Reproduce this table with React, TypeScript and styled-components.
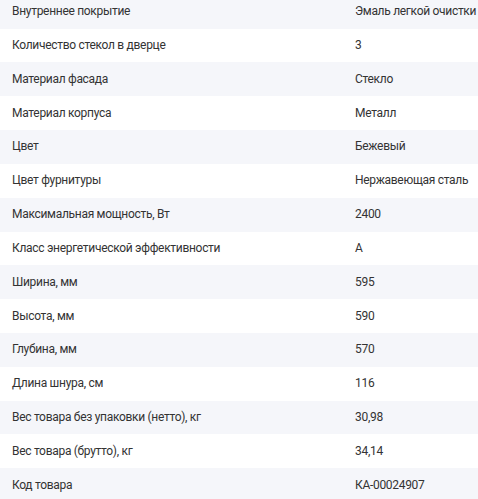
import React from 'react';
import styled, { createGlobalStyle } from 'styled-components';

const GlobalStyle = createGlobalStyle`
  html, body {
    margin: 0;
    padding: 0;
    background: #fff;
    overflow: hidden;
  }
  body {
    font-family: Roboto, "Noto Sans", sans-serif;
    color: #333;
  }
`;

const specs: [string, string][] = [
  ['Внутреннее покрытие', 'Эмаль легкой очистки'],
  ['Количество стекол в дверце', '3'],
  ['Материал фасада', 'Стекло'],
  ['Материал корпуса', 'Металл'],
  ['Цвет', 'Бежевый'],
  ['Цвет фурнитуры', 'Нержавеющая сталь'],
  ['Максимальная мощность, Вт', '2400'],
  ['Класс энергетической эффективности', 'А'],
  ['Ширина, мм', '595'],
  ['Высота, мм', '590'],
  ['Глубина, мм', '570'],
  ['Длина шнура, см', '116'],
  ['Вес товара без упаковки (нетто), кг', '30,98'],
  ['Вес товара (брутто), кг', '34,14'],
  ['Код товара', 'КА-00024907'],
];

const Table = styled.div`
  display: flex;
  flex-direction: column;
  margin-top: -5.3px;
`;

const Row = styled.div<{ $shaded: boolean }>`
  display: grid;
  grid-template-columns: 343px 1fr;
  height: 33.83px;
  align-items: center;
  background: ${(p) => (p.$shaded ? '#f5f6fa' : '#fff')};
`;

const Cell = styled.div`
  padding: 0 12px;
  font-size: 12px;
  letter-spacing: -0.3px;
  line-height: 17px;
  white-space: nowrap;
`;

const App = () => (
  <>
    <GlobalStyle />
    <Table>
      {specs.map(([label, value], i) => (
        <Row key={label} $shaded={i % 2 === 0}>
          <Cell>{label}</Cell>
          <Cell>{value}</Cell>
        </Row>
      ))}
    </Table>
  </>
);

export default App;
